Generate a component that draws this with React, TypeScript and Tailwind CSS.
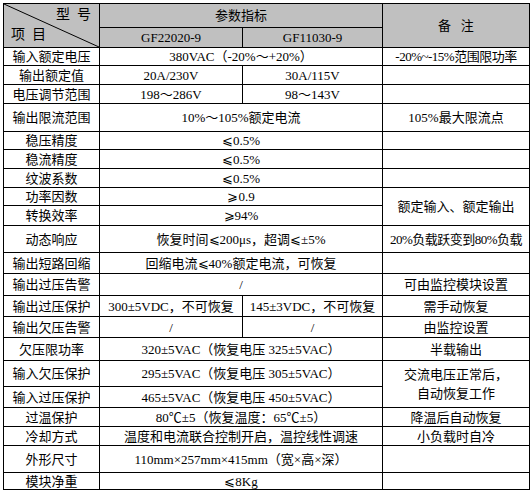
import type { ReactNode } from 'react'

function C({ children, className = '' }: { children?: ReactNode; className?: string }) {
  return (
    <div className={`flex items-center justify-center whitespace-nowrap border-r border-b border-black text-center leading-none ${className}`}>
      {children}
    </div>
  )
}

export default function App() {
  return (
    <div className="min-h-[493px] w-[531px] bg-white pt-[3px] pl-[3px] text-[13px] text-black [font-family:'Liberation_Serif','Noto_Sans_CJK_SC',sans-serif]">
      <div className="grid w-[527px] grid-cols-[96px_143px_140px_147px] grid-rows-[24px_20px_18px_19px_19px_28px_18px_19px_19px_18px_20px_27px_21px_22px_21px_21px_23px_26px_21px_19px_19px_27px_17px] border-t border-l border-black">
        {/* 表头 */}
        <div className="relative row-span-2 border-r border-b border-black bg-[#c0c0c0]">
          <svg className="absolute inset-0 h-full w-full" preserveAspectRatio="none" viewBox="0 0 100 100">
            <line x1="0" y1="0" x2="100" y2="100" stroke="#000" strokeWidth="1" vectorEffect="non-scaling-stroke" />
          </svg>
          <span className="absolute top-[4px] right-[8px] text-[14px] leading-none">型&nbsp;&nbsp;号</span>
          <span className="absolute bottom-[5px] left-[7px] text-[14px] leading-none">项&nbsp;&nbsp;目</span>
        </div>
        <C className="col-span-2 bg-[#c0c0c0]">参数指标</C>
        <C className="row-span-2 bg-[#c0c0c0]">备&nbsp;&nbsp;&nbsp;注</C>
        <C className="bg-[#c0c0c0]">GF22020-9</C>
        <C className="bg-[#c0c0c0]">GF11030-9</C>

        <C>输入额定电压</C>
        <C className="col-span-2">380VAC（-20%～+20%）</C>
        <C className="tracking-[-0.5px]">-20%~-15%范围限功率</C>

        <C>输出额定值</C>
        <C>20A/230V</C>
        <C>30A/115V</C>
        <C />

        <C>电压调节范围</C>
        <C>198～286V</C>
        <C>98～143V</C>
        <C />

        <C>输出限流范围</C>
        <C className="col-span-2">10%～105%额定电流</C>
        <C>105%最大限流点</C>

        <C>稳压精度</C>
        <C className="col-span-2">⩽0.5%</C>
        <C />

        <C>稳流精度</C>
        <C className="col-span-2">⩽0.5%</C>
        <C />

        <C>纹波系数</C>
        <C className="col-span-2">⩽0.5%</C>
        <C />

        <C>功率因数</C>
        <C className="col-span-2">⩾0.9</C>
        <C className="row-span-2">额定输入、额定输出</C>

        <C>转换效率</C>
        <C className="col-span-2">⩾94%</C>

        <C>动态响应</C>
        <C className="col-span-2">恢复时间⩽200μs，超调⩽±5%</C>
        <C className="tracking-[-0.5px]">20%负载跃变到80%负载</C>

        <C>输出短路回缩</C>
        <C className="col-span-2">回缩电流⩽40%额定电流，可恢复</C>
        <C />

        <C>输出过压告警</C>
        <C className="col-span-2">/</C>
        <C>可由监控模块设置</C>

        <C>输出过压保护</C>
        <C>300±5VDC，不可恢复</C>
        <C>145±3VDC，不可恢复</C>
        <C>需手动恢复</C>

        <C>输出欠压告警</C>
        <C>/</C>
        <C>/</C>
        <C>由监控设置</C>

        <C>欠压限功率</C>
        <C className="col-span-2">320±5VAC（恢复电压 325±5VAC）</C>
        <C>半载输出</C>

        <C>输入欠压保护</C>
        <C className="col-span-2">295±5VAC（恢复电压 305±5VAC）</C>
        <C className="row-span-2 flex-col gap-[6px]">
          <span>交流电压正常后，</span>
          <span>自动恢复工作</span>
        </C>

        <C>输入过压保护</C>
        <C className="col-span-2">465±5VAC（恢复电压 450±5VAC）</C>

        <C>过温保护</C>
        <C className="col-span-2">80℃±5（恢复温度：65℃±5）</C>
        <C>降温后自动恢复</C>

        <C>冷却方式</C>
        <C className="col-span-2">温度和电流联合控制开启，温控线性调速</C>
        <C>小负载时自冷</C>

        <C>外形尺寸</C>
        <C className="col-span-2">110mm×257mm×415mm（宽×高×深）</C>
        <C />

        <C>模块净重</C>
        <C className="col-span-2">⩽8Kg</C>
        <C />
      </div>
    </div>
  )
}
